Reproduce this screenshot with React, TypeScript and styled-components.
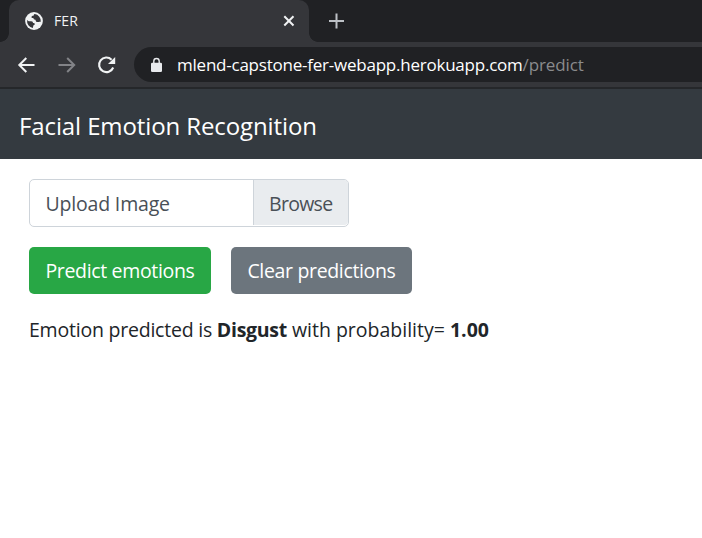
import React from 'react';
import styled, { createGlobalStyle } from 'styled-components';

const Global = createGlobalStyle`
  *, *::before, *::after { box-sizing: border-box; }
  body {
    margin: 0;
    background: #fff;
    color: #212529;
    font-family: "Open Sans", "Noto Sans", sans-serif;
    overflow: hidden;
  }
`;

const Text = styled.span<{ $spacing?: number }>`
  letter-spacing: ${(p) => p.$spacing ?? 0}px;
  white-space: pre;
`;

const TabStrip = styled.div`
  display: flex;
  height: 42px;
  padding-left: 9px;
  background: #202124;
`;

const Tab = styled.div`
  position: relative;
  display: flex;
  align-items: center;
  width: 300px;
  height: 42px;
  padding: 0 13px 0 16px;
  border-radius: 10px 10px 0 0;
  background: #35363a;
  color: #f1f3f4;
  font-size: 14px;
  line-height: 42px;

  &::before,
  &::after {
    content: "";
    position: absolute;
    bottom: 0;
    width: 9px;
    height: 9px;
  }
  &::before {
    left: -9px;
    background: radial-gradient(circle at 0 0, transparent 8.5px, #35363a 9.2px);
  }
  &::after {
    right: -9px;
    background: radial-gradient(circle at 100% 0, transparent 8.5px, #35363a 9.2px);
  }
`;

const TabTitle = styled(Text)`
  flex: 1;
  margin-left: 11px;
`;

const NewTab = styled.div`
  display: flex;
  align-items: center;
  margin-left: 20px;
`;

const Toolbar = styled.div`
  display: flex;
  align-items: center;
  height: 45px;
  padding-left: 17px;
  background: #35363a;
`;

const NavIcons = styled.div`
  display: flex;
  gap: 20px;
  width: 117px;
`;

const AddressBar = styled.div`
  display: flex;
  align-items: center;
  flex: 1;
  height: 35px;
  padding-left: 16px;
  border-radius: 18px 0 0 18px;
  background: #202124;
  color: #fff;
  font-size: 17px;
  line-height: 35px;
`;

const Url = styled.div`
  display: flex;
  margin-left: 14px;
`;

const UrlPath = styled(Text)`
  color: #8a8b8d;
`;

const NavBar = styled.header`
  height: 72px;
  padding: 2px 19px 0;
  border-top: 2px solid #25272a;
  background: #343a40;
  color: #fff;
  font-size: 24px;
  line-height: 70px;
`;

const Content = styled.main`
  display: flex;
  flex-direction: column;
  gap: 20px;
  padding: 20px 29px;
  font-size: 19.5px;
`;

const FileInput = styled.div`
  display: flex;
  width: 320px;
  height: 48px;
  border: 1px solid #ced4da;
  border-radius: 5px;
  color: #495057;
  line-height: 48px;
`;

const FileName = styled.div`
  flex: 1;
  padding-left: 15.5px;
`;

const Browse = styled.div`
  width: 95px;
  height: 45px;
  padding-left: 15px;
  border-left: 1px solid #ced4da;
  border-radius: 0 4px 4px 0;
  background: #e9ecef;
`;

const Actions = styled.div`
  display: flex;
  gap: 20px;
`;

const Button = styled.button<{ $color: string; $width: number }>`
  width: ${(p) => p.$width}px;
  height: 47px;
  padding: 0;
  border: 0;
  border-radius: 5px;
  background: ${(p) => p.$color};
  color: #fff;
  font: inherit;
  line-height: 47px;
`;

const Result = styled.p`
  display: flex;
  margin: 0;
  line-height: 32px;
`;

const Strong = styled(Text)`
  font-weight: 700;
`;

const Globe = () => (
  <svg width="18" height="18" viewBox="0 0 18 18">
    <circle cx="9" cy="9" r="8.9" fill="#f1f3f4" />
    <path
      d="M2.1 8.1C3.3 9.5 4.2 9.3 6.1 9.2c1.5 0 2 .7 1.8 1.8 1.1 0 1.9.2 1.9 1.1 0 1.3-1.6 1-1.6 2 0 .7-.2 1.4-.4 1.8A7 7 0 0 1 2.1 8.1Z"
      fill="#35363a"
    />
    <path
      d="M9.7 2.1C8.9 2.5 8.8 2.9 8.6 3.8 7.4 3.8 6.5 4.1 6.5 5c0 1 .8 1.2 1.9 1.1.1 1.2.8 1.7 2.1 1.6.2 1.6.7 2.3 2.1 2.3 1.1 0 1.6-.5 3.2-.3A7 7 0 0 0 9.7 2.1Z"
      fill="#35363a"
    />
  </svg>
);

const Close = () => (
  <svg width="14" height="14" viewBox="0 0 14 14">
    <path d="M2.3 2.3l9.2 9.2M11.5 2.3l-9.2 9.2" stroke="#f1f3f4" strokeWidth="2" />
  </svg>
);

const Plus = () => (
  <svg width="16" height="16" viewBox="0 0 16 16">
    <path d="M7.5.5v15M0 8h15" stroke="#bdc1c6" strokeWidth="2" />
  </svg>
);

const Arrow = ({ forward = false }: { forward?: boolean }) => (
  <svg width="20" height="20" viewBox="0 0 20 20">
    <path
      d={forward ? 'M1.5 10h15.2M10.2 3l7 7-7 7' : 'M17.5 10H2.8M9.3 3l-7 7 7 7'}
      fill="none"
      stroke={forward ? '#828387' : '#f1f3f4'}
      strokeWidth="2"
    />
  </svg>
);

const Reload = () => (
  <svg width="20" height="20" viewBox="0 0 20 20">
    <path
      d="M16.2 12.5A7.3 7.3 0 1 1 14.6 4.7"
      fill="none"
      stroke="#f1f3f4"
      strokeWidth="2.1"
    />
    <path d="M18.2 2v7.1H11Z" fill="#f1f3f4" />
  </svg>
);

const Lock = () => (
  <svg width="13" height="16" viewBox="0 0 13 16">
    <rect x="1" y="5.8" width="11" height="9.2" rx="1.3" fill="#e8eaed" />
    <path d="M3.8 6.5V4.2a2.7 2.7 0 0 1 5.4 0v2.3" fill="none" stroke="#e8eaed" strokeWidth="1.4" />
  </svg>
);

export default function App() {
  return (
    <>
      <Global />
      <TabStrip>
        <Tab>
          <Globe />
          <TabTitle $spacing={0.1}>FER</TabTitle>
          <Close />
        </Tab>
        <NewTab>
          <Plus />
        </NewTab>
      </TabStrip>
      <Toolbar>
        <NavIcons>
          <Arrow />
          <Arrow forward />
          <Reload />
        </NavIcons>
        <AddressBar>
          <Lock />
          <Url>
            <Text $spacing={-0.23}>mlend-capstone-fer-webapp.herokuapp.com</Text>
            <UrlPath $spacing={-0.1}>/predict</UrlPath>
          </Url>
        </AddressBar>
      </Toolbar>
      <NavBar>
        <Text $spacing={-0.11}>Facial Emotion Recognition</Text>
      </NavBar>
      <Content>
        <FileInput>
          <FileName>
            <Text $spacing={-0.18}>Upload Image</Text>
          </FileName>
          <Browse>
            <Text $spacing={-0.7}>Browse</Text>
          </Browse>
        </FileInput>
        <Actions>
          <Button $color="#28a745" $width={182}>
            <Text $spacing={-0.34}>Predict emotions</Text>
          </Button>
          <Button $color="#6c757d" $width={181}>
            <Text $spacing={-0.34}>Clear predictions</Text>
          </Button>
        </Actions>
        <Result>
          <Text $spacing={-0.22}>Emotion predicted is </Text>
          <Strong $spacing={-0.3}>Disgust</Strong>
          <Text $spacing={0}> with probability= </Text>
          <Strong>1.00</Strong>
        </Result>
      </Content>
    </>
  );
}
